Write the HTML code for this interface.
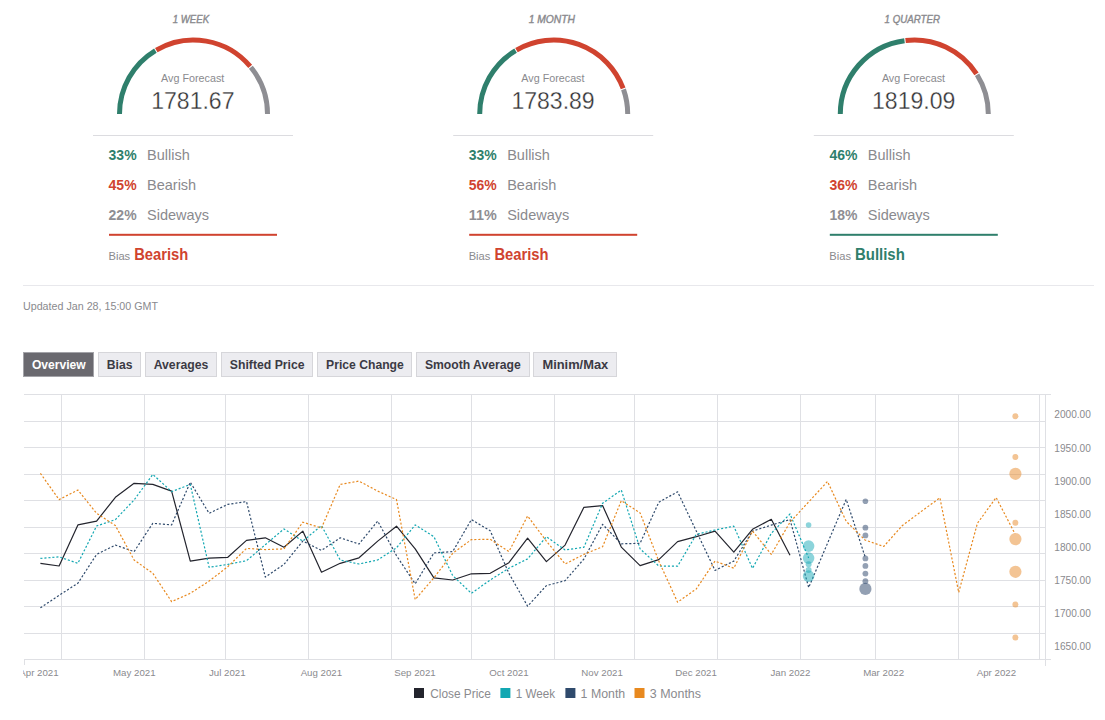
<!DOCTYPE html>
<html><head><meta charset="utf-8"><style>
html,body{margin:0;padding:0;background:#fff;width:1105px;height:720px;overflow:hidden}
svg{display:block;font-family:"Liberation Sans", sans-serif}
</style></head><body>
<svg width="1105" height="720" viewBox="0 0 1105 720">
<path d="M119.50,114.00 A74,74 0 0 1 155.39,50.57" fill="none" stroke="#2f7f6c" stroke-width="5"/>
<path d="M156.28,50.04 A74,74 0 0 1 250.19,66.43" fill="none" stroke="#d0432f" stroke-width="5"/>
<path d="M250.85,67.23 A74,74 0 0 1 267.50,114.00" fill="none" stroke="#8e8e93" stroke-width="5"/>
<text stroke="#8a8a8e" stroke-width="0.4" x="172.70" y="22.9" font-size="10.6" fill="#8a8a8e" font-weight="normal" font-style="italic" text-anchor="start" textLength="36.40" lengthAdjust="spacingAndGlyphs">1 WEEK</text>
<text x="161.10" y="82" font-size="10.8" fill="#8a8a8e" font-weight="normal" font-style="normal" text-anchor="start" textLength="63.20" lengthAdjust="spacingAndGlyphs">Avg Forecast</text>
<text stroke="#fff" stroke-width="0.3" x="151.20" y="108.7" font-size="23.6" fill="#333335" font-weight="normal" font-style="normal" text-anchor="start" textLength="83.30" lengthAdjust="spacingAndGlyphs">1781.67</text>
<rect x="93.0" y="135" width="200" height="1" fill="#dcdce0"/>
<text x="108.60" y="159.8" font-size="15" fill="#2f7f6c" font-weight="bold" font-style="normal" text-anchor="start" textLength="28.00" lengthAdjust="spacingAndGlyphs">33%</text>
<text x="147.0" y="159.8" font-size="14.5" fill="#8a8a8e" font-weight="normal" font-style="normal" text-anchor="start">Bullish</text>
<text x="108.60" y="189.9" font-size="15" fill="#d0432f" font-weight="bold" font-style="normal" text-anchor="start" textLength="28.00" lengthAdjust="spacingAndGlyphs">45%</text>
<text x="147.0" y="189.9" font-size="14.5" fill="#8a8a8e" font-weight="normal" font-style="normal" text-anchor="start">Bearish</text>
<text x="108.60" y="220.0" font-size="15" fill="#8e8e93" font-weight="bold" font-style="normal" text-anchor="start" textLength="28.00" lengthAdjust="spacingAndGlyphs">22%</text>
<text x="147.0" y="220.0" font-size="14.5" fill="#8a8a8e" font-weight="normal" font-style="normal" text-anchor="start">Sideways</text>
<rect x="109.0" y="233.8" width="168" height="2" fill="#d0432f"/>
<text x="108.50" y="259.7" font-size="10.5" fill="#8a8a8e" font-weight="normal" font-style="normal" text-anchor="start" textLength="21.70" lengthAdjust="spacingAndGlyphs">Bias</text>
<text x="134.20" y="259.7" font-size="16" fill="#d0432f" font-weight="bold" font-style="normal" text-anchor="start" textLength="54.10" lengthAdjust="spacingAndGlyphs">Bearish</text>
<path d="M479.70,114.00 A74,74 0 0 1 515.59,50.57" fill="none" stroke="#2f7f6c" stroke-width="5"/>
<path d="M516.48,50.04 A74,74 0 0 1 623.15,88.45" fill="none" stroke="#d0432f" stroke-width="5"/>
<path d="M623.50,89.42 A74,74 0 0 1 627.70,114.00" fill="none" stroke="#8e8e93" stroke-width="5"/>
<text stroke="#8a8a8e" stroke-width="0.4" x="528.70" y="22.9" font-size="10.6" fill="#8a8a8e" font-weight="normal" font-style="italic" text-anchor="start" textLength="46.30" lengthAdjust="spacingAndGlyphs">1 MONTH</text>
<text x="521.30" y="82" font-size="10.8" fill="#8a8a8e" font-weight="normal" font-style="normal" text-anchor="start" textLength="63.20" lengthAdjust="spacingAndGlyphs">Avg Forecast</text>
<text stroke="#fff" stroke-width="0.3" x="511.40" y="108.7" font-size="23.6" fill="#333335" font-weight="normal" font-style="normal" text-anchor="start" textLength="83.30" lengthAdjust="spacingAndGlyphs">1783.89</text>
<rect x="453.20000000000005" y="135" width="200" height="1" fill="#dcdce0"/>
<text x="468.80" y="159.8" font-size="15" fill="#2f7f6c" font-weight="bold" font-style="normal" text-anchor="start" textLength="28.00" lengthAdjust="spacingAndGlyphs">33%</text>
<text x="507.20000000000005" y="159.8" font-size="14.5" fill="#8a8a8e" font-weight="normal" font-style="normal" text-anchor="start">Bullish</text>
<text x="468.80" y="189.9" font-size="15" fill="#d0432f" font-weight="bold" font-style="normal" text-anchor="start" textLength="28.00" lengthAdjust="spacingAndGlyphs">56%</text>
<text x="507.20000000000005" y="189.9" font-size="14.5" fill="#8a8a8e" font-weight="normal" font-style="normal" text-anchor="start">Bearish</text>
<text x="468.80" y="220.0" font-size="15" fill="#8e8e93" font-weight="bold" font-style="normal" text-anchor="start" textLength="28.00" lengthAdjust="spacingAndGlyphs">11%</text>
<text x="507.20000000000005" y="220.0" font-size="14.5" fill="#8a8a8e" font-weight="normal" font-style="normal" text-anchor="start">Sideways</text>
<rect x="469.20000000000005" y="233.8" width="168" height="2" fill="#d0432f"/>
<text x="468.70" y="259.7" font-size="10.5" fill="#8a8a8e" font-weight="normal" font-style="normal" text-anchor="start" textLength="21.70" lengthAdjust="spacingAndGlyphs">Bias</text>
<text x="494.40" y="259.7" font-size="16" fill="#d0432f" font-weight="bold" font-style="normal" text-anchor="start" textLength="54.10" lengthAdjust="spacingAndGlyphs">Bearish</text>
<path d="M840.30,114.00 A74,74 0 0 1 904.51,40.65" fill="none" stroke="#2f7f6c" stroke-width="5"/>
<path d="M905.54,40.52 A74,74 0 0 1 976.50,73.91" fill="none" stroke="#d0432f" stroke-width="5"/>
<path d="M977.06,74.79 A74,74 0 0 1 988.30,114.00" fill="none" stroke="#8e8e93" stroke-width="5"/>
<text stroke="#8a8a8e" stroke-width="0.4" x="884.60" y="22.9" font-size="10.6" fill="#8a8a8e" font-weight="normal" font-style="italic" text-anchor="start" textLength="55.40" lengthAdjust="spacingAndGlyphs">1 QUARTER</text>
<text x="881.90" y="82" font-size="10.8" fill="#8a8a8e" font-weight="normal" font-style="normal" text-anchor="start" textLength="63.20" lengthAdjust="spacingAndGlyphs">Avg Forecast</text>
<text stroke="#fff" stroke-width="0.3" x="872.00" y="108.7" font-size="23.6" fill="#333335" font-weight="normal" font-style="normal" text-anchor="start" textLength="83.30" lengthAdjust="spacingAndGlyphs">1819.09</text>
<rect x="813.8" y="135" width="200" height="1" fill="#dcdce0"/>
<text x="829.40" y="159.8" font-size="15" fill="#2f7f6c" font-weight="bold" font-style="normal" text-anchor="start" textLength="28.00" lengthAdjust="spacingAndGlyphs">46%</text>
<text x="867.8" y="159.8" font-size="14.5" fill="#8a8a8e" font-weight="normal" font-style="normal" text-anchor="start">Bullish</text>
<text x="829.40" y="189.9" font-size="15" fill="#d0432f" font-weight="bold" font-style="normal" text-anchor="start" textLength="28.00" lengthAdjust="spacingAndGlyphs">36%</text>
<text x="867.8" y="189.9" font-size="14.5" fill="#8a8a8e" font-weight="normal" font-style="normal" text-anchor="start">Bearish</text>
<text x="829.40" y="220.0" font-size="15" fill="#8e8e93" font-weight="bold" font-style="normal" text-anchor="start" textLength="28.00" lengthAdjust="spacingAndGlyphs">18%</text>
<text x="867.8" y="220.0" font-size="14.5" fill="#8a8a8e" font-weight="normal" font-style="normal" text-anchor="start">Sideways</text>
<rect x="829.8" y="233.8" width="168" height="2" fill="#2f7f6c"/>
<text x="829.30" y="259.7" font-size="10.5" fill="#8a8a8e" font-weight="normal" font-style="normal" text-anchor="start" textLength="21.70" lengthAdjust="spacingAndGlyphs">Bias</text>
<text x="855.00" y="259.7" font-size="16" fill="#2f7f6c" font-weight="bold" font-style="normal" text-anchor="start" textLength="49.80" lengthAdjust="spacingAndGlyphs">Bullish</text>
<rect x="23" y="285" width="1071" height="1" fill="#e8e8ec"/>
<text x="23.00" y="309.8" font-size="11" fill="#8a8a8e" font-weight="normal" font-style="normal" text-anchor="start" textLength="135.00" lengthAdjust="spacingAndGlyphs">Updated Jan 28, 15:00 GMT</text>
<rect x="23.5" y="352.5" width="70" height="24" fill="#6a696f" stroke="#a3a3a8" stroke-width="1"/>
<text x="31.90" y="369" font-size="13" fill="#ffffff" font-weight="bold" font-style="normal" text-anchor="start" textLength="53.90" lengthAdjust="spacingAndGlyphs">Overview</text>
<rect x="98.5" y="352.5" width="42" height="24" fill="#ececf0" stroke="#d6d6da" stroke-width="1"/>
<text x="106.80" y="369" font-size="13" fill="#3b3a44" font-weight="bold" font-style="normal" text-anchor="start" textLength="25.70" lengthAdjust="spacingAndGlyphs">Bias</text>
<rect x="145.5" y="352.5" width="71" height="24" fill="#ececf0" stroke="#d6d6da" stroke-width="1"/>
<text x="153.70" y="369" font-size="13" fill="#3b3a44" font-weight="bold" font-style="normal" text-anchor="start" textLength="54.60" lengthAdjust="spacingAndGlyphs">Averages</text>
<rect x="221.5" y="352.5" width="91" height="24" fill="#ececf0" stroke="#d6d6da" stroke-width="1"/>
<text x="229.80" y="369" font-size="13" fill="#3b3a44" font-weight="bold" font-style="normal" text-anchor="start" textLength="74.80" lengthAdjust="spacingAndGlyphs">Shifted Price</text>
<rect x="317.5" y="352.5" width="94" height="24" fill="#ececf0" stroke="#d6d6da" stroke-width="1"/>
<text x="326.10" y="369" font-size="13" fill="#3b3a44" font-weight="bold" font-style="normal" text-anchor="start" textLength="77.70" lengthAdjust="spacingAndGlyphs">Price Change</text>
<rect x="416.5" y="352.5" width="113" height="24" fill="#ececf0" stroke="#d6d6da" stroke-width="1"/>
<text x="424.90" y="369" font-size="13" fill="#3b3a44" font-weight="bold" font-style="normal" text-anchor="start" textLength="95.80" lengthAdjust="spacingAndGlyphs">Smooth Average</text>
<rect x="533.5" y="352.5" width="83" height="24" fill="#ececf0" stroke="#d6d6da" stroke-width="1"/>
<text x="542.40" y="369" font-size="13" fill="#3b3a44" font-weight="bold" font-style="normal" text-anchor="start" textLength="65.90" lengthAdjust="spacingAndGlyphs">Minim/Max</text>
<rect x="24" y="394" width="1027" height="1" fill="#dfe0e4"/>
<rect x="24" y="421" width="1022" height="1" fill="#dfe0e4"/>
<rect x="24" y="447" width="1022" height="1" fill="#dfe0e4"/>
<rect x="24" y="474" width="1022" height="1" fill="#dfe0e4"/>
<rect x="24" y="500" width="1022" height="1" fill="#dfe0e4"/>
<rect x="24" y="527" width="1022" height="1" fill="#dfe0e4"/>
<rect x="24" y="553" width="1022" height="1" fill="#dfe0e4"/>
<rect x="24" y="580" width="1022" height="1" fill="#dfe0e4"/>
<rect x="24" y="606" width="1022" height="1" fill="#dfe0e4"/>
<rect x="24" y="633" width="1022" height="1" fill="#dfe0e4"/>
<rect x="24" y="659" width="1027" height="1" fill="#dfe0e4"/>
<rect x="61" y="394" width="1" height="265" fill="#dfe0e4"/>
<rect x="144" y="394" width="1" height="265" fill="#dfe0e4"/>
<rect x="225" y="394" width="1" height="265" fill="#dfe0e4"/>
<rect x="308" y="394" width="1" height="265" fill="#dfe0e4"/>
<rect x="391" y="394" width="1" height="265" fill="#dfe0e4"/>
<rect x="471" y="394" width="1" height="265" fill="#dfe0e4"/>
<rect x="554" y="394" width="1" height="265" fill="#dfe0e4"/>
<rect x="634" y="394" width="1" height="265" fill="#dfe0e4"/>
<rect x="717" y="394" width="1" height="265" fill="#dfe0e4"/>
<rect x="800" y="394" width="1" height="265" fill="#dfe0e4"/>
<rect x="875" y="394" width="1" height="265" fill="#dfe0e4"/>
<rect x="958" y="394" width="1" height="265" fill="#dfe0e4"/>
<rect x="1039" y="394" width="1" height="265" fill="#dfe0e4"/>
<rect x="1045" y="394" width="1" height="272" fill="#dfe0e4"/>
<rect x="24" y="659" width="1" height="6" fill="#dfe0e4"/>
<text x="1054.30" y="418.29999999999995" font-size="10" fill="#8a8a8e" font-weight="normal" font-style="normal" text-anchor="start" textLength="36.50" lengthAdjust="spacingAndGlyphs">2000.00</text>
<text x="1054.30" y="451.7" font-size="10" fill="#8a8a8e" font-weight="normal" font-style="normal" text-anchor="start" textLength="36.50" lengthAdjust="spacingAndGlyphs">1950.00</text>
<text x="1054.30" y="484.5" font-size="10" fill="#8a8a8e" font-weight="normal" font-style="normal" text-anchor="start" textLength="36.50" lengthAdjust="spacingAndGlyphs">1900.00</text>
<text x="1054.30" y="517.6" font-size="10" fill="#8a8a8e" font-weight="normal" font-style="normal" text-anchor="start" textLength="36.50" lengthAdjust="spacingAndGlyphs">1850.00</text>
<text x="1054.30" y="550.6" font-size="10" fill="#8a8a8e" font-weight="normal" font-style="normal" text-anchor="start" textLength="36.50" lengthAdjust="spacingAndGlyphs">1800.00</text>
<text x="1054.30" y="583.9" font-size="10" fill="#8a8a8e" font-weight="normal" font-style="normal" text-anchor="start" textLength="36.50" lengthAdjust="spacingAndGlyphs">1750.00</text>
<text x="1054.30" y="617.3" font-size="10" fill="#8a8a8e" font-weight="normal" font-style="normal" text-anchor="start" textLength="36.50" lengthAdjust="spacingAndGlyphs">1700.00</text>
<text x="1054.30" y="650.4" font-size="10" fill="#8a8a8e" font-weight="normal" font-style="normal" text-anchor="start" textLength="36.50" lengthAdjust="spacingAndGlyphs">1650.00</text>
<defs><clipPath id="xc"><rect x="23" y="660" width="1082" height="30"/></clipPath></defs>
<g clip-path="url(#xc)">
<text x="39" y="675.9" font-size="9.7" fill="#8a8a8e" font-weight="normal" font-style="normal" text-anchor="middle">Apr 2021</text>
<text x="134.3" y="675.9" font-size="9.7" fill="#8a8a8e" font-weight="normal" font-style="normal" text-anchor="middle">May 2021</text>
<text x="227.3" y="675.9" font-size="9.7" fill="#8a8a8e" font-weight="normal" font-style="normal" text-anchor="middle">Jul 2021</text>
<text x="321.4" y="675.9" font-size="9.7" fill="#8a8a8e" font-weight="normal" font-style="normal" text-anchor="middle">Aug 2021</text>
<text x="415" y="675.9" font-size="9.7" fill="#8a8a8e" font-weight="normal" font-style="normal" text-anchor="middle">Sep 2021</text>
<text x="509" y="675.9" font-size="9.7" fill="#8a8a8e" font-weight="normal" font-style="normal" text-anchor="middle">Oct 2021</text>
<text x="602.1" y="675.9" font-size="9.7" fill="#8a8a8e" font-weight="normal" font-style="normal" text-anchor="middle">Nov 2021</text>
<text x="696.1" y="675.9" font-size="9.7" fill="#8a8a8e" font-weight="normal" font-style="normal" text-anchor="middle">Dec 2021</text>
<text x="790.4" y="675.9" font-size="9.7" fill="#8a8a8e" font-weight="normal" font-style="normal" text-anchor="middle">Jan 2022</text>
<text x="883.6" y="675.9" font-size="9.7" fill="#8a8a8e" font-weight="normal" font-style="normal" text-anchor="middle">Mar 2022</text>
<text x="996.4" y="675.9" font-size="9.7" fill="#8a8a8e" font-weight="normal" font-style="normal" text-anchor="middle">Apr 2022</text>
</g>
<polyline points="40.4,563.3 59.1,566.0 77.9,524.9 96.6,521.1 115.4,497.3 134.1,483.3 152.8,484.4 171.6,491.1 190.3,561.1 209.1,558.2 227.8,557.3 246.5,540.4 265.3,537.8 284.0,547.3 302.8,531.1 321.5,572.2 340.2,563.3 359.0,557.8 377.7,541.1 396.5,526.2 415.2,548.9 433.9,577.8 452.7,580.0 471.4,573.8 490.2,573.3 508.9,562.7 527.6,538.2 546.4,561.6 565.1,545.1 583.9,507.3 602.6,505.6 621.3,547.1 640.1,565.6 658.8,559.6 677.6,541.6 696.3,536.7 715.0,531.1 733.8,552.2 752.5,529.3 771.3,519.3 790.0,555.2" fill="none" stroke="#23242d" stroke-width="1.2" stroke-linejoin="round"/>
<polyline points="40.4,558.4 59.1,556.9 77.9,563.3 96.6,526.0 115.4,519.6 134.1,500.0 152.8,474.4 171.6,491.6 190.3,484.4 209.1,567.3 227.8,564.4 246.5,560.7 265.3,544.7 284.0,528.9 302.8,541.1 321.5,525.6 340.2,560.0 359.0,564.0 377.7,560.0 396.5,547.8 415.2,524.9 433.9,536.7 452.7,575.6 471.4,593.3 490.2,580.0 508.9,568.2 527.6,558.9 546.4,536.7 565.1,550.0 583.9,547.3 602.6,503.3 621.3,490.0 640.1,548.9 658.8,566.0 677.6,566.2 696.3,534.4 715.0,530.0 733.8,526.2 752.5,568.4 771.3,533.3 790.0,514.0 808.7,558.1" fill="none" stroke="#12a7b2" stroke-width="1.2" stroke-linejoin="round" stroke-dasharray="2.1,1.9"/>
<polyline points="40.4,607.8 59.1,595.3 77.9,583.2 96.6,554.4 115.4,545.1 134.1,551.6 152.8,523.3 171.6,524.9 190.3,482.2 209.1,513.3 227.8,504.4 246.5,501.6 265.3,577.1 284.0,564.4 302.8,541.1 321.5,550.4 340.2,537.8 359.0,544.0 377.7,521.1 396.5,555.6 415.2,583.8 433.9,552.9 452.7,551.6 471.4,519.6 490.2,530.7 508.9,573.3 527.6,606.2 546.4,585.6 565.1,580.7 583.9,559.0 602.6,524.4 621.3,543.8 640.1,543.3 658.8,502.2 677.6,491.8 715.0,570.4 733.8,561.1 752.5,531.1 771.3,525.1 790.0,519.6 808.7,587.5 846.2,499.4 865.0,556.5" fill="none" stroke="#2f4a6c" stroke-width="1.2" stroke-linejoin="round" stroke-dasharray="2.1,1.9"/>
<polyline points="40.4,473.3 59.1,499.6 77.9,490.0 96.6,513.3 115.4,525.6 134.1,560.0 152.8,573.3 171.6,601.6 190.3,593.3 209.1,581.1 227.8,566.7 246.5,548.4 265.3,549.6 284.0,548.9 302.8,522.2 321.5,528.0 340.2,484.4 359.0,481.1 377.7,491.1 396.5,499.6 415.2,599.6 433.9,577.8 452.7,553.3 471.4,539.6 490.2,539.3 508.9,551.6 527.6,516.0 546.4,541.1 565.1,564.0 583.9,554.4 602.6,546.7 621.3,500.7 640.1,512.9 658.8,561.1 677.6,602.2 696.3,588.9 715.0,561.1 733.8,568.2 752.5,531.1 771.3,554.4 790.0,522.2 827.5,481.5 846.2,521.3 865.0,540.0 883.7,546.5 902.4,525.5 921.2,511.5 939.9,497.8 958.7,592.5 977.4,523.3 996.1,497.5 1014.9,533.6" fill="none" stroke="#e8891f" stroke-width="1.2" stroke-linejoin="round" stroke-dasharray="2.1,1.9"/>
<circle cx="808.6" cy="525" r="2.8" fill="#1aa9b8" fill-opacity="0.5"/>
<circle cx="808.6" cy="546.1" r="5.8" fill="#1aa9b8" fill-opacity="0.5"/>
<circle cx="808.6" cy="558.1" r="5.8" fill="#1aa9b8" fill-opacity="0.5"/>
<circle cx="808.6" cy="564.2" r="3" fill="#1aa9b8" fill-opacity="0.5"/>
<circle cx="808.6" cy="570.1" r="3" fill="#1aa9b8" fill-opacity="0.5"/>
<circle cx="808.6" cy="576.1" r="5.8" fill="#1aa9b8" fill-opacity="0.5"/>
<circle cx="865.4" cy="501.2" r="2.8" fill="#3a5274" fill-opacity="0.55"/>
<circle cx="865.4" cy="527.7" r="2.9" fill="#3a5274" fill-opacity="0.55"/>
<circle cx="865.4" cy="535.4" r="2.9" fill="#3a5274" fill-opacity="0.55"/>
<circle cx="865.4" cy="558.4" r="2.9" fill="#3a5274" fill-opacity="0.55"/>
<circle cx="865.4" cy="565.9" r="2.9" fill="#3a5274" fill-opacity="0.55"/>
<circle cx="865.4" cy="573.6" r="2.9" fill="#3a5274" fill-opacity="0.55"/>
<circle cx="865.4" cy="581.2" r="2.9" fill="#3a5274" fill-opacity="0.55"/>
<circle cx="865.4" cy="588.9" r="6.1" fill="#3a5274" fill-opacity="0.55"/>
<circle cx="1015.4" cy="416.2" r="3" fill="#e8892a" fill-opacity="0.5"/>
<circle cx="1015.4" cy="457" r="3" fill="#e8892a" fill-opacity="0.5"/>
<circle cx="1015.4" cy="473.8" r="6.1" fill="#e8892a" fill-opacity="0.5"/>
<circle cx="1015.4" cy="522.8" r="3" fill="#e8892a" fill-opacity="0.5"/>
<circle cx="1015.4" cy="539.1" r="6.1" fill="#e8892a" fill-opacity="0.5"/>
<circle cx="1015.4" cy="571.8" r="6.1" fill="#e8892a" fill-opacity="0.5"/>
<circle cx="1015.4" cy="604.5" r="3" fill="#e8892a" fill-opacity="0.5"/>
<circle cx="1015.4" cy="637.4" r="3" fill="#e8892a" fill-opacity="0.5"/>
<rect x="414" y="688" width="10" height="10" fill="#23242d"/>
<text x="430.20" y="697.9" font-size="12" fill="#8a8a8e" font-weight="normal" font-style="normal" text-anchor="start" textLength="60.60" lengthAdjust="spacingAndGlyphs">Close Price</text>
<rect x="500.4" y="688" width="10" height="10" fill="#12a7b2"/>
<text x="515.80" y="697.9" font-size="12" fill="#8a8a8e" font-weight="normal" font-style="normal" text-anchor="start" textLength="39.30" lengthAdjust="spacingAndGlyphs">1 Week</text>
<rect x="565.4" y="688" width="10" height="10" fill="#2f4a6c"/>
<text x="580.60" y="697.9" font-size="12" fill="#8a8a8e" font-weight="normal" font-style="normal" text-anchor="start" textLength="44.60" lengthAdjust="spacingAndGlyphs">1 Month</text>
<rect x="634.5" y="688" width="10" height="10" fill="#e8891f"/>
<text x="649.80" y="697.9" font-size="12" fill="#8a8a8e" font-weight="normal" font-style="normal" text-anchor="start" textLength="51.20" lengthAdjust="spacingAndGlyphs">3 Months</text>
</svg></body></html>
